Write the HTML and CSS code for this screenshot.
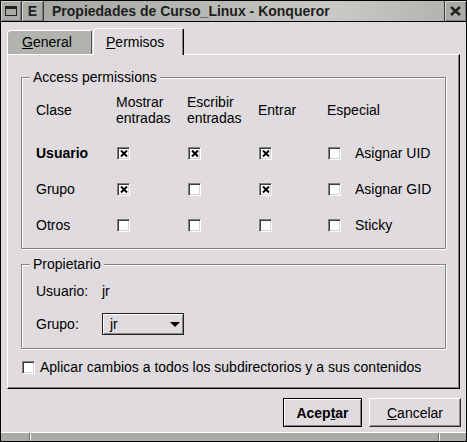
FILE: index.html
```html
<!DOCTYPE html>
<html lang="es">
<head>
<meta charset="utf-8">
<title>Propiedades de Curso_Linux - Konqueror</title>
<link rel="stylesheet" href="styles.css">
</head>
<body>
<div class="window">
  <div class="titlebar">
    <div class="tbtn menu">
      <svg width="12" height="10" viewBox="0 0 12 10"><rect x="0.5" y="0.5" width="11" height="9" fill="none" stroke="#222" stroke-width="1"/><rect x="0" y="0" width="12" height="3" fill="#222"/></svg>
    </div>
    <div class="tbtn ebtn">E</div>
    <div class="title">Propiedades de Curso_Linux - Konqueror</div>
    <div class="tbtn close">
      <svg width="11" height="10" viewBox="0 0 11 10"><path d="M1 1 L10 9 M10 1 L1 9" stroke="#222" stroke-width="2.4" fill="none"/></svg>
    </div>
  </div>

  <div class="body">
    <div class="tabs">
      <div class="tab inactive"><u>G</u>eneral</div>
      <div class="tab active"><u>P</u>ermisos</div>
    </div>

    <div class="panel">
      <fieldset class="group perms">
        <legend>Access permissions</legend>
        <div class="grid">
          <div class="hdr">Clase</div>
          <div class="hdr">Mostrar<br>entradas</div>
          <div class="hdr">Escribir<br>entradas</div>
          <div class="hdr">Entrar</div>
          <div class="hdr">Especial</div>

          <div class="cls bold">Usuario</div>
          <div class="cell"><span class="cb"><svg width="8" height="7" viewBox="0 0 8 7"><path d="M1 0.5 L7 6.5 M7 0.5 L1 6.5" stroke="#000" stroke-width="2" fill="none"/></svg></span></div>
          <div class="cell"><span class="cb"><svg width="8" height="7" viewBox="0 0 8 7"><path d="M1 0.5 L7 6.5 M7 0.5 L1 6.5" stroke="#000" stroke-width="2" fill="none"/></svg></span></div>
          <div class="cell"><span class="cb"><svg width="8" height="7" viewBox="0 0 8 7"><path d="M1 0.5 L7 6.5 M7 0.5 L1 6.5" stroke="#000" stroke-width="2" fill="none"/></svg></span></div>
          <div class="cell special"><span class="cb"></span><span class="slabel">Asignar UID</span></div>

          <div class="cls">Grupo</div>
          <div class="cell"><span class="cb"><svg width="8" height="7" viewBox="0 0 8 7"><path d="M1 0.5 L7 6.5 M7 0.5 L1 6.5" stroke="#000" stroke-width="2" fill="none"/></svg></span></div>
          <div class="cell"><span class="cb"></span></div>
          <div class="cell"><span class="cb"><svg width="8" height="7" viewBox="0 0 8 7"><path d="M1 0.5 L7 6.5 M7 0.5 L1 6.5" stroke="#000" stroke-width="2" fill="none"/></svg></span></div>
          <div class="cell special"><span class="cb"></span><span class="slabel">Asignar GID</span></div>

          <div class="cls">Otros</div>
          <div class="cell"><span class="cb"></span></div>
          <div class="cell"><span class="cb"></span></div>
          <div class="cell"><span class="cb"></span></div>
          <div class="cell special"><span class="cb"></span><span class="slabel">Sticky</span></div>
        </div>
      </fieldset>

      <fieldset class="group owner">
        <legend>Propietario</legend>
        <div class="orow">
          <span class="olabel">Usuario:</span><span>jr</span>
        </div>
        <div class="orow combo-row">
          <span class="olabel">Grupo:</span>
          <div class="combo"><span class="combo-text">jr</span><svg width="10" height="5" viewBox="0 0 10 5"><polygon points="0,0 10,0 5,5" fill="#000"/></svg></div>
        </div>
      </fieldset>

      <div class="apply"><span class="cb"></span><span>Aplicar cambios a todos los subdirectorios y a sus contenidos</span></div>
    </div>

    <div class="buttons">
      <div class="btn default">Acep<u>t</u>ar</div>
      <div class="btn cancel"><u>C</u>ancelar</div>
    </div>
  </div>

  <div class="bottom">
    <span class="seg s1"></span>
    <span class="seg s2"></span>
    <span class="seg s3"></span>
  </div>
</div>
</body>
</html>
```

FILE: styles.css
```css
* { box-sizing: border-box; }

body {
  margin: 0;
  font-family: "Liberation Sans", Arial, sans-serif;
  font-size: 14px;
  line-height: 16px;
  color: #000;
  background: #dfdbde;
}

.window {
  width: 467px;
  height: 442px;
  border: 1px solid #000;
  display: flex;
  flex-direction: column;
  background: #dfdbde;
}

/* title bar */
.titlebar {
  height: 21px;
  flex: none;
  border-bottom: 1px solid #000;
  display: flex;
  background: linear-gradient(to right, #a3a5a0 0%, #b4b6b1 40%, #c9cac6 72%, #aeb0ab 100%);
}
.tbtn {
  flex: none;
  width: 21px;
  display: flex;
  align-items: center;
  justify-content: center;
  background: #a9aba6;
  box-shadow: inset 1px 1px 0 #d3d4d0, inset -1px -1px 0 #7d7e7a;
}
.tbtn.menu { width: 21px; border-right: 1px solid #3a3a3a; }
.tbtn.ebtn {
  width: 22px;
  border-right: 1px solid #3a3a3a;
  font-weight: bold;
  font-size: 14px;
  color: #222;
}
.tbtn.close { width: 22px; border-left: 1px solid #3a3a3a; }
.title {
  flex: 1;
  padding-left: 8px;
  font-weight: bold;
  font-size: 14px;
  line-height: 20px;
  color: #1e1e1e;
  white-space: nowrap;
  overflow: hidden;
}

/* body */
.body {
  flex: 1;
  padding: 6px 5px 0 6px;
  display: flex;
  flex-direction: column;
}

.tabs {
  height: 26px;
  display: flex;
  align-items: flex-end;
}
.tab {
  white-space: nowrap;
}
.tab.inactive {
  width: 85px;
  height: 24px;
  margin-right: 1px;
  background: #b1b4ae;
  border-top: 1px solid #fff;
  border-left: 1px solid #fff;
  border-right: 1px solid #4f4f4f;
  border-radius: 4px 2px 0 0;
  padding: 3px 0 0 14px;
}
.tab.active {
  width: 91px;
  height: 27px;
  margin-bottom: -1px;
  position: relative;
  z-index: 1;
  background: #dfdbde;
  border-top: 1px solid #fff;
  border-left: 1px solid #fff;
  border-right: 1px solid #000;
  box-shadow: inset -1px 0 0 #808080;
  border-radius: 4px 2px 0 0;
  padding: 5px 0 0 12px;
}

.panel {
  width: 453px;
  height: 335px;
  border-top: 1px solid #fff;
  border-left: 1px solid #fff;
  border-right: 1px solid #000;
  border-bottom: 1px solid #000;
  box-shadow: inset -1px -1px 0 #808080;
  padding: 14px 13px 0 13px;
}

/* group boxes */
.group {
  margin: 0;
  min-width: 0;
  border: 1px solid #858585;
  box-shadow: 1px 1px 0 #fff, inset 1px 1px 0 #fff;
}
.group legend {
  padding: 0 3px;
  line-height: 16px;
  background: #dfdbde;
}
.perms { padding: 9px 0 5px 8px; }

.grid {
  margin-left: 6px;
  display: grid;
  grid-template-columns: 80px 71px 71px 69px 1fr;
  grid-template-rows: 41px 36px 36px 36px;
  align-items: center;
}
.hdr {
  align-self: start;
  height: 32px;
  display: flex;
  align-items: center;
}
.cls { }
.bold { font-weight: bold; }
.cell {
  display: flex;
  align-items: center;
  padding-left: 1px;
}
.special .slabel { margin-left: 14px; }

.cb {
  flex: none;
  width: 13px;
  height: 13px;
  display: inline-flex;
  align-items: center;
  justify-content: center;
  background: #fff;
  border: 1px solid;
  border-color: #808080 #fff #fff #808080;
  box-shadow: inset 1px 1px 0 #3c3c3c, inset -1px -1px 0 #d6d2d5;
}

.owner {
  margin-top: 7px;
  padding: 11px 0 13px 8px;
}
.orow {
  margin-left: 6px;
  display: flex;
  align-items: center;
  height: 16px;
}
.olabel { width: 66px; flex: none; }
.combo-row {
  margin-top: 14px;
  height: 22px;
}
.combo {
  width: 82px;
  height: 22px;
  display: flex;
  align-items: center;
  justify-content: space-between;
  padding: 0 3px 0 7px;
  border: 1px solid #222;
  box-shadow: inset 1px 1px 0 #fff, inset -1px -1px 0 #868686;
  background: #dfdbde;
}

.apply {
  margin-top: 10px;
  margin-left: 1px;
  height: 16px;
  display: flex;
  align-items: center;
  white-space: nowrap;
}
.apply .cb { margin-right: 5px; }

/* buttons */
.buttons {
  margin-top: 9px;
  display: flex;
  justify-content: flex-end;
  gap: 7px;
}
.btn {
  height: 29px;
  display: flex;
  align-items: center;
  justify-content: center;
  background: #dfdbde;
}
.btn.default {
  width: 79px;
  font-weight: bold;
  border: 1px solid #000;
  box-shadow: inset 1px 1px 0 #fff, inset -1px -1px 0 #808080;
}
.btn.cancel {
  width: 92px;
  border: 1px solid;
  border-color: #fff #2e2e2e #2e2e2e #fff;
  box-shadow: inset -1px -1px 0 #8c8c8c;
}

/* bottom frame */
.bottom {
  height: 9px;
  flex: none;
  border-top: 1px solid #fff;
  background: #a9aba6;
  display: flex;
}
.seg { display: block; height: 100%; }
.s1 { width: 29px; border-right: 1px solid #6b6b6b; }
.s2 { flex: 1; border-left: 1px solid #fff; border-right: 1px solid #6b6b6b; }
.s3 { width: 27px; border-left: 1px solid #fff; }
```
